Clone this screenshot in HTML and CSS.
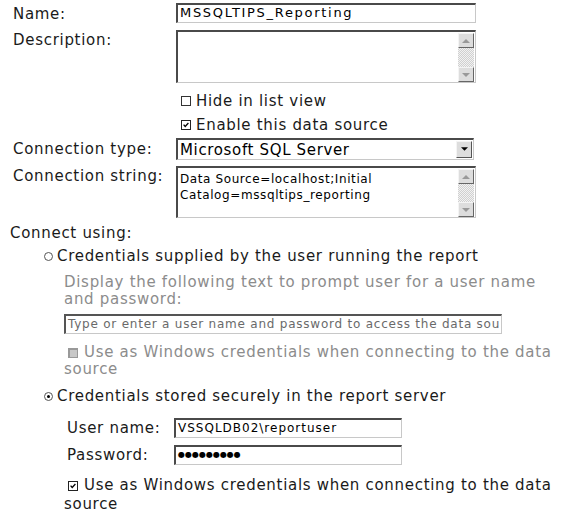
FILE: index.html
```html
<!DOCTYPE html>
<html>
<head>
<meta charset="utf-8">
<link rel="stylesheet" href="styles.css">
</head>
<body>
<div class="page">
  <div class="row r-name">
    <div class="label">Name:</div>
    <div class="field input w300 namefield">MSSQLTIPS_Reporting</div>
  </div>
  <div class="row r-desc">
    <div class="label">Description:</div>
    <div class="field textarea w300 h53">
      <div class="ta-text"></div>
      <div class="sb"><span class="sbtn up"></span><span class="track"></span><span class="sbtn down"></span></div>
    </div>
  </div>
  <div class="checks">
    <div class="chk-row"><span class="cb"></span><span>Hide in list view</span></div>
    <div class="chk-row"><span class="cb on"><svg viewBox="0 0 10 10"><path d="M2 4.5 L4 6.8 L8 2.5" fill="none" stroke="#000" stroke-width="1.6"/></svg></span><span>Enable this data source</span></div>
  </div>
  <div class="row r-type">
    <div class="label">Connection type:</div>
    <div class="field select">
      <span class="sel-text">Microsoft SQL Server</span>
      <span class="sel-btn"><svg viewBox="0 0 8 5"><path d="M0 0 H8 L4 4 Z" fill="#000"/></svg></span>
    </div>
  </div>
  <div class="row r-str">
    <div class="label">Connection string:</div>
    <div class="field textarea w300 h52">
      <div class="ta-text">Data Source=localhost;Initial<br>Catalog=mssqltips_reporting</div>
      <div class="sb"><span class="sbtn up"></span><span class="track"></span><span class="sbtn down"></span></div>
    </div>
  </div>
  <div class="using">Connect using:</div>
  <div class="opt">
    <div class="radio-row"><span class="rb"></span><span>Credentials supplied by the user running the report</span></div>
    <div class="sub gray">
      <div class="prompt">Display the following text to prompt user for a user name<br>and password:</div>
      <div class="field input wide graytext">Type or enter a user name and password to access the data sou</div>
      <div class="chk-row wrap"><span class="cb dis"></span><span class="chk-text">Use as Windows credentials when connecting to the data<br>source</span></div>
    </div>
  </div>
  <div class="opt opt2">
    <div class="radio-row"><span class="rb on"></span><span>Credentials stored securely in the report server</span></div>
    <div class="sub">
      <div class="cred-row"><div class="clabel">User name:</div><div class="field input w228 userfield">VSSQLDB02\reportuser</div></div>
      <div class="cred-row"><div class="clabel">Password:</div><div class="field input w228 pw">&#9679;&#9679;&#9679;&#9679;&#9679;&#9679;&#9679;&#9679;&#9679;</div></div>
      <div class="chk-row wrap"><span class="cb on"><svg viewBox="0 0 10 10"><path d="M2 4.5 L4 6.8 L8 2.5" fill="none" stroke="#000" stroke-width="1.6"/></svg></span><span class="chk-text">Use as Windows credentials when connecting to the data<br>source</span></div>
    </div>
  </div>
</div>
</body>
</html>
```
FILE: styles.css
```css
html, body { margin: 0; padding: 0; background: #fff; }
body { font-family: "DejaVu Sans", Verdana, sans-serif; font-size: 15px; color: #1a1a1a; letter-spacing: 0.7px; }
.page { padding: 3px 0 0 13px; width: 565px; }
.row { display: flex; align-items: flex-start; }
.label { width: 163px; flex: none; line-height: 18px; }
.field { box-sizing: border-box; background: #fff; border-style: solid; border-width: 2px 1px 1px 2px; border-color: #4a4a4a #c8c8c8 #c8c8c8 #4a4a4a; }
.input { height: 20px; font-size: 12px; line-height: 16px; padding: 0 2px; white-space: nowrap; overflow: hidden; color: #000; }
.namefield { font-size: 13px; letter-spacing: 1.7px; }
.userfield { letter-spacing: 1px; }
.w300 { width: 300px; }
.w228 { width: 228px; }
.wide { width: 438px; }
.r-name .label { padding-top: 2px; }
.r-desc { margin-top: 7px; }
.r-desc .label { padding-top: 1px; }
.textarea { display: flex; position: relative; }
.h53 { height: 53px; }
.h52 { height: 52px; }
.ta-text { flex: 1; font-size: 12px; line-height: 16px; padding: 3px 2px; color: #000; letter-spacing: 0.6px; }
.sb { width: 16px; display: flex; flex-direction: column; margin: 1px 1px 0 0; }
.sbtn { height: 15px; box-sizing: border-box; background: #ddd; border: 1px solid; border-color: #f4f4f4 #666 #666 #f4f4f4; display: flex; align-items: center; justify-content: center; }
.sbtn::after { content: ""; border-left: 4px solid transparent; border-right: 4px solid transparent; }
.sbtn.up::after { border-bottom: 4px solid #999; }
.sbtn.down::after { border-top: 4px solid #999; }
.track { flex: 1; background-color: #eee; background-image: repeating-conic-gradient(#d0d0d0 0 25%, #f2f2f2 0 50%); background-size: 2px 2px; }
.checks { padding-left: 168px; margin-top: 6px; }
.chk-row { display: flex; align-items: center; line-height: 17px; }
.checks .chk-row { height: 24px; }
.cb { width: 10px; height: 10px; box-sizing: border-box; border: 1px solid #333; margin-right: 5px; flex: none; background: #fff; display: inline-flex; }
.cb svg { width: 100%; height: 100%; }
.cb.on { border-color: #222; }
.cb.dis { background: #c8c8c8; border-color: #999; border-width: 2px 1px 1px 2px; }
.r-type { margin-top: 1px; }
.r-type .label { padding-top: 2px; }
.select { width: 298px; height: 22px; display: flex; align-items: center; border-width: 2px 1px 1px 2px; }
.sel-text { flex: 1; padding-left: 2px; font-size: 15px; color: #000; letter-spacing: 0.65px; }
.sel-btn { width: 16px; height: 17px; box-sizing: border-box; margin-right: 1px; background: #ddd; border: 1px solid; border-color: #f4f4f4 #555 #555 #f4f4f4; display: flex; align-items: center; justify-content: center; }
.sel-btn svg { width: 7px; height: 5px; }
.r-str { margin-top: 6px; }
.r-str .label { padding-top: 1px; }
.using { margin: 6px 0 0 -3px; line-height: 18px; }
.opt { padding-left: 31px; }
.radio-row { display: flex; align-items: center; line-height: 18px; margin-top: 5px; }
.rb { width: 9px; height: 9px; border-radius: 50%; box-sizing: border-box; border: 1px solid #555; margin-right: 4px; position: relative; flex: none; }
.rb.on::after { content: ""; position: absolute; left: 2px; top: 2px; width: 3px; height: 3px; border-radius: 50%; background: #000; }
.sub { padding-left: 20px; }
.gray { color: #8c8c8c; }
.prompt { margin-top: 9px; line-height: 17px; width: 520px; }
.gray .input { margin-top: 6px; border-color: #555 #c8c8c8 #c8c8c8 #555; }
.graytext { color: #6a6a6a; font-size: 12px; letter-spacing: 0.77px; }
.sub .chk-row.wrap { display: block; position: relative; text-indent: 20px; width: 510px; margin-top: 10px; line-height: 17px; }
.sub .chk-row.wrap .cb { position: absolute; left: 0; top: 0; margin: 4px 0 0 4px; text-indent: 0; }
.opt2 .radio-row { margin-top: 9px; }
.cred-row { display: flex; align-items: center; margin-top: 13px; }
.cred-row + .cred-row { margin-top: 7px; }
.clabel { width: 107px; flex: none; padding-left: 3px; line-height: 18px; }
.pw { font-size: 8px; letter-spacing: 0; line-height: 16px; }
.opt2 .sub .chk-row.wrap { margin-top: 11px; line-height: 19px; }
.opt2 .sub .chk-row.wrap .cb { margin-top: 5px; }
```
